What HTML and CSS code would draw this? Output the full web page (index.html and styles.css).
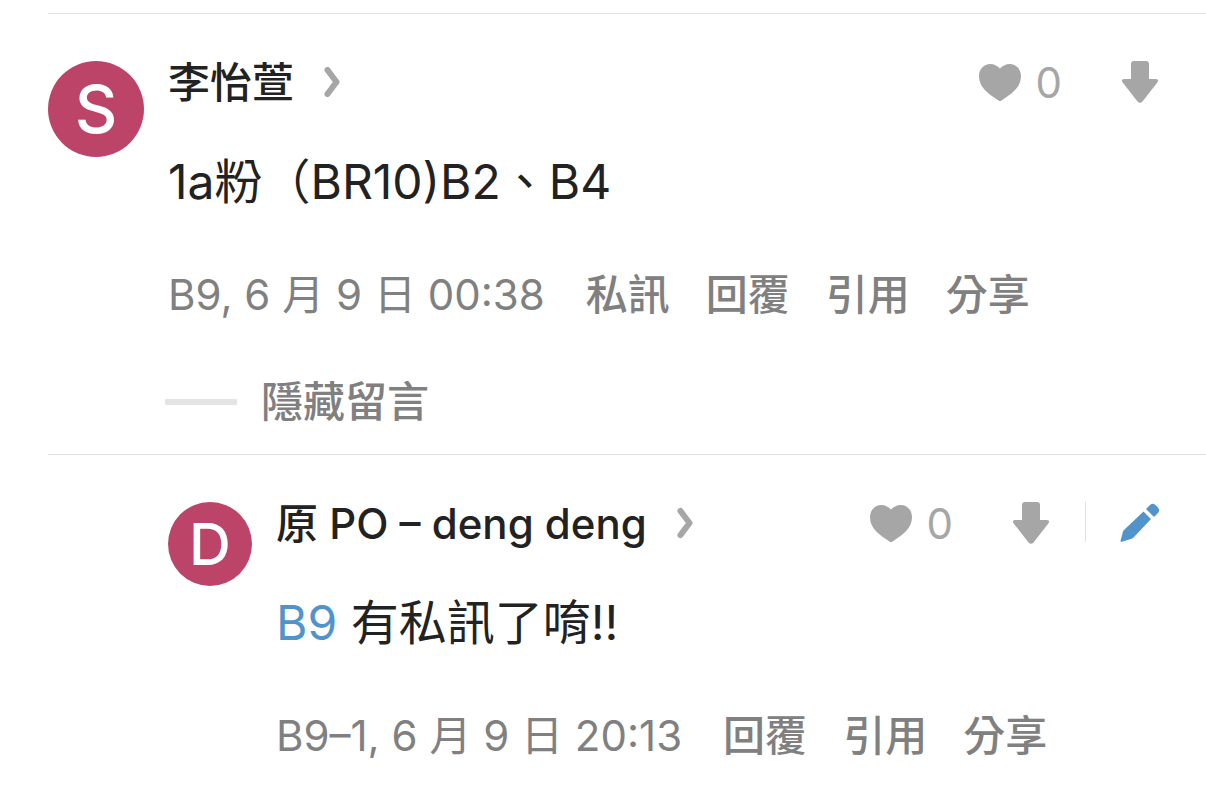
FILE: index.html
```html
<!DOCTYPE html>
<html lang="zh-Hant">
<head>
    <meta charset="UTF-8">
    <meta name="viewport" content="width=device-width, initial-scale=1.0">
    <title>留言</title>
    <link rel="stylesheet" href="styles.css">
</head>
<body>
    <!-- Shared icons -->
    <svg class="sprite" aria-hidden="true">
        <symbol id="icon-chevron" viewBox="0 0 16 42">
            <path d="M3.500 9 L12.500 21 L3.500 33" fill="none" stroke="currentColor" stroke-width="6" stroke-linecap="round" stroke-linejoin="round"/>
        </symbol>
        <symbol id="icon-heart" viewBox="0 0 42 42">
            <path d="M21 7.5 C24 4.6 27 3 30.5 3 C37.2 3 42 8.3 42 15 C42 26 33.5 32.5 22.5 39.4 Q21 40.4 19.5 39.4 C8.5 32.5 0 26 0 15 C0 8.3 4.8 3 11.5 3 C15 3 18 4.6 21 7.5 Z" fill="currentColor"/>
        </symbol>
        <symbol id="icon-down" viewBox="0 0 36 42">
            <path d="M12 0 H24 Q27 0 27 3 V18 H33.5 Q37.5 18 35.3 21.4 L20.5 40.4 Q18 43.3 15.5 40.4 L0.7 21.4 Q-1.5 18 2.5 18 H9 V3 Q9 0 12 0 Z" fill="currentColor"/>
        </symbol>
        <symbol id="icon-edit" viewBox="0 0 40 42">
            <path d="M23.5 9.5 L31 17 L14 35 Q13 36.3 11.5 36.8 L2 39.8 Q0.2 40.2 0.6 38.5 L3 29.5 Q3.500 28.500 4.500 27.500 Z" fill="currentColor"/>
            <path d="M26 7 L30 3 Q33 0.500 36 3.500 L37.500 5 Q40.500 8 38 11 L34 15 Z" fill="currentColor"/>
        </symbol>
    </svg>

    <main class="comments">
        <article class="comment">
            <div class="avatar">S</div>
            <div class="comment-body">
                <header class="comment-header">
                    <a class="author" href="#">李怡萱 <svg class="chevron"><use href="#icon-chevron"/></svg></a>
                    <div class="actions">
                        <button class="like" type="button" aria-label="喜歡"><svg class="heart"><use href="#icon-heart"/></svg>0</button>
                        <button type="button" aria-label="不喜歡"><svg class="down"><use href="#icon-down"/></svg></button>
                    </div>
                </header>
                <p class="content">1a粉（BR10)B2、B4</p>
                <footer class="meta">
                    <span class="date">B9, 6 月 9 日 00:38</span>
                    <button type="button">私訊</button>
                    <button type="button">回覆</button>
                    <button type="button">引用</button>
                    <button type="button">分享</button>
                </footer>
            </div>
        </article>

        <button class="toggle-replies" type="button">隱藏留言</button>

        <article class="comment reply">
            <div class="avatar">D</div>
            <div class="comment-body">
                <header class="comment-header">
                    <a class="author" href="#">原 PO – deng deng <svg class="chevron"><use href="#icon-chevron"/></svg></a>
                    <div class="actions">
                        <button class="like" type="button" aria-label="喜歡"><svg class="heart"><use href="#icon-heart"/></svg>0</button>
                        <button type="button" aria-label="不喜歡"><svg class="down"><use href="#icon-down"/></svg></button>
                        <button class="edit" type="button" aria-label="編輯"><svg class="pencil"><use href="#icon-edit"/></svg></button>
                    </div>
                </header>
                <p class="content"><a class="mention" href="#">B9</a> 有私訊了唷!!</p>
                <footer class="meta">
                    <span class="date">B9–1, 6 月 9 日 20:13</span>
                    <button type="button">回覆</button>
                    <button type="button">引用</button>
                    <button type="button">分享</button>
                </footer>
            </div>
        </article>
    </main>
</body>
</html>
```
FILE: styles.css
```css
body {
    margin: 0;
    padding-top: 13px;
    background-color: #fff;
    color: #222;
    font-family: Inter, "Noto Sans CJK TC", sans-serif;
    font-size: 42px;
    line-height: 44px;
}

a {
    color: inherit;
    text-decoration: none;
}

button {
    padding: 0;
    border: none;
    background: none;
    color: inherit;
    font: inherit;
    cursor: pointer;
}

svg {
    display: block;
    height: 42px;
}

.sprite {
    position: absolute;
    width: 0;
    height: 0;
}

.comments {
    margin-left: 48px;
}

/* Comment */
.comment {
    display: flex;
    gap: 24px;
    padding: 47px 48px 0 0;
    border-top: 1px solid #e0e0e0;
}

.reply {
    padding-left: 120px;
}

.avatar {
    display: flex;
    flex-shrink: 0;
    align-items: center;
    justify-content: center;
    width: 96px;
    height: 96px;
    border-radius: 50%;
    background-color: #bc4468;
    color: #fff;
    font-size: 66px;
    font-weight: 500;
}

.reply .avatar {
    width: 84px;
    height: 84px;
    font-size: 58px;
}

.comment-body {
    flex: 1;
    min-width: 0;
}

/* Name and actions */
.comment-header {
    display: flex;
    justify-content: space-between;
    height: 42px;
}

.author {
    display: flex;
    gap: 30px;
    font-weight: 500;
    white-space: nowrap;
}

.chevron {
    width: 16px;
    color: #a6a6a6;
}

.actions {
    display: flex;
    align-items: flex-start;
    gap: 60px;
    color: #a6a6a6;
}

.like {
    display: flex;
    gap: 15px;
}

.heart {
    width: 42px;
}

.down {
    width: 36px;
}

.pencil {
    width: 40px;
}

.edit {
    height: 40px;
    margin: 0 -2px 0 -24px;
    padding-left: 34px;
    border-left: 1px solid #e0e0e0;
    color: #5194cb;
}

/* Text */
.content {
    margin: 44px 0 56px;
    font-size: 48px;
    line-height: 70px;
}

.mention {
    color: #5194cb;
}

.meta {
    display: flex;
    flex-wrap: wrap;
    gap: 36px;
    color: #808080;
}

.date {
    margin-right: 5px;
}

.meta button,
.toggle-replies {
    font-weight: 500;
}

.toggle-replies {
    display: flex;
    align-items: center;
    gap: 24px;
    margin: 63px 0 30px 117px;
    color: #808080;
}

.toggle-replies::before {
    content: "";
    width: 72px;
    height: 6px;
    background-color: #e4e4e4;
}
```
